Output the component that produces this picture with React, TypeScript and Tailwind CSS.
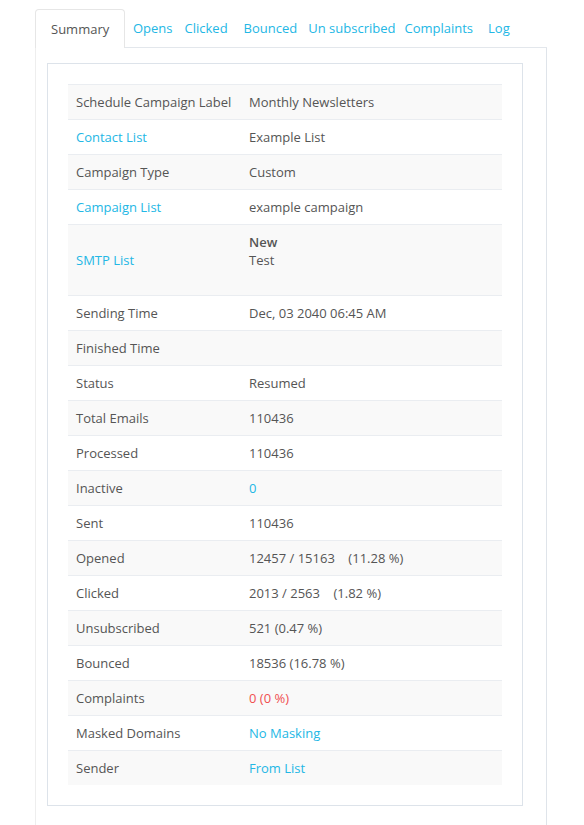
const rows: { label: string; value: React.ReactNode; labelLink?: boolean }[] = [
  { label: "Schedule Campaign Label", value: "Monthly Newsletters" },
  { label: "Contact List", value: "Example List", labelLink: true },
  { label: "Campaign Type", value: "Custom" },
  { label: "Campaign List", value: "example campaign", labelLink: true },
];

const rest: { label: string; value: React.ReactNode }[] = [
  { label: "Sending Time", value: "Dec, 03 2040 06:45 AM" },
  { label: "Finished Time", value: "" },
  { label: "Status", value: "Resumed" },
  { label: "Total Emails", value: "110436" },
  { label: "Processed", value: "110436" },
  { label: "Inactive", value: <a className="text-[#23b7e5]">0</a> },
  { label: "Sent", value: "110436" },
  { label: "Opened", value: "12457 / 15163    (11.28 %)" },
  { label: "Clicked", value: "2013 / 2563    (1.82 %)" },
  { label: "Unsubscribed", value: "521 (0.47 %)" },
  { label: "Bounced", value: "18536 (16.78 %)" },
  { label: "Complaints", value: <span className="text-[#f05050]">0 (0 %)</span> },
  { label: "Masked Domains", value: <a className="text-[#23b7e5]">No Masking</a> },
  { label: "Sender", value: <a className="text-[#23b7e5]">From List</a> },
];

const Row = ({ label, value, link, odd }: { label: string; value: React.ReactNode; link?: boolean; odd: boolean }) => (
  <div className={`flex items-center h-[35px] border-t border-[#eaedf1] ${odd ? "bg-[#f9f9f9]" : "bg-white"}`}>
    <div className={`w-[181px] pl-[8px] ${link ? "text-[#23b7e5]" : ""}`}>{label}</div>
    <div className="whitespace-pre">{value}</div>
  </div>
);

export default function App() {
  return (
    <div className="bg-white min-h-[825px] text-[13px] leading-[18px] text-[#555]" style={{ fontFamily: "'Open Sans', 'Liberation Sans', sans-serif" }}>
      <div className="ml-[35px] w-[512px] pt-[9px]">
        <div className="flex items-center h-[39px] border-b border-[#e3e7ec] text-[#23b7e5]">
          <div className="self-end h-[39px] -mb-px px-[15px] flex items-center bg-white border border-b-0 border-[#e6e6e6] rounded-t-[4px] text-[#555] w-[90px]">
            Summary
          </div>
          <a className="ml-[8px]">Opens</a>
          <a className="ml-[12px]">Clicked</a>
          <a className="ml-[16px]">Bounced</a>
          <a className="ml-[11px]">Un subscribed</a>
          <a className="ml-[9px]">Complaints</a>
          <a className="ml-[15px]">Log</a>
        </div>
        <div className="border-l border-l-[#eeeeee] border-r border-r-[#dfe4ea] pt-[15px] pl-[11px] pb-[20px]">
          <div className="w-[476px] border border-[#dde3ea] p-[20px]">
            {rows.map((r, i) => (
              <Row key={r.label} label={r.label} value={r.value} link={r.labelLink} odd={i % 2 === 0} />
            ))}
            <div className="flex h-[71px] border-t border-[#eaedf1] bg-[#f9f9f9]">
              <div className="w-[181px] pl-[8px] self-center text-[#23b7e5]">SMTP List</div>
              <div className="pt-[8px]">
                <div className="font-semibold">New</div>
                <div>Test</div>
              </div>
            </div>
            {rest.map((r, i) => (
              <Row key={r.label} label={r.label} value={r.value} odd={i % 2 === 1} />
            ))}
          </div>
        </div>
      </div>
    </div>
  );
}
